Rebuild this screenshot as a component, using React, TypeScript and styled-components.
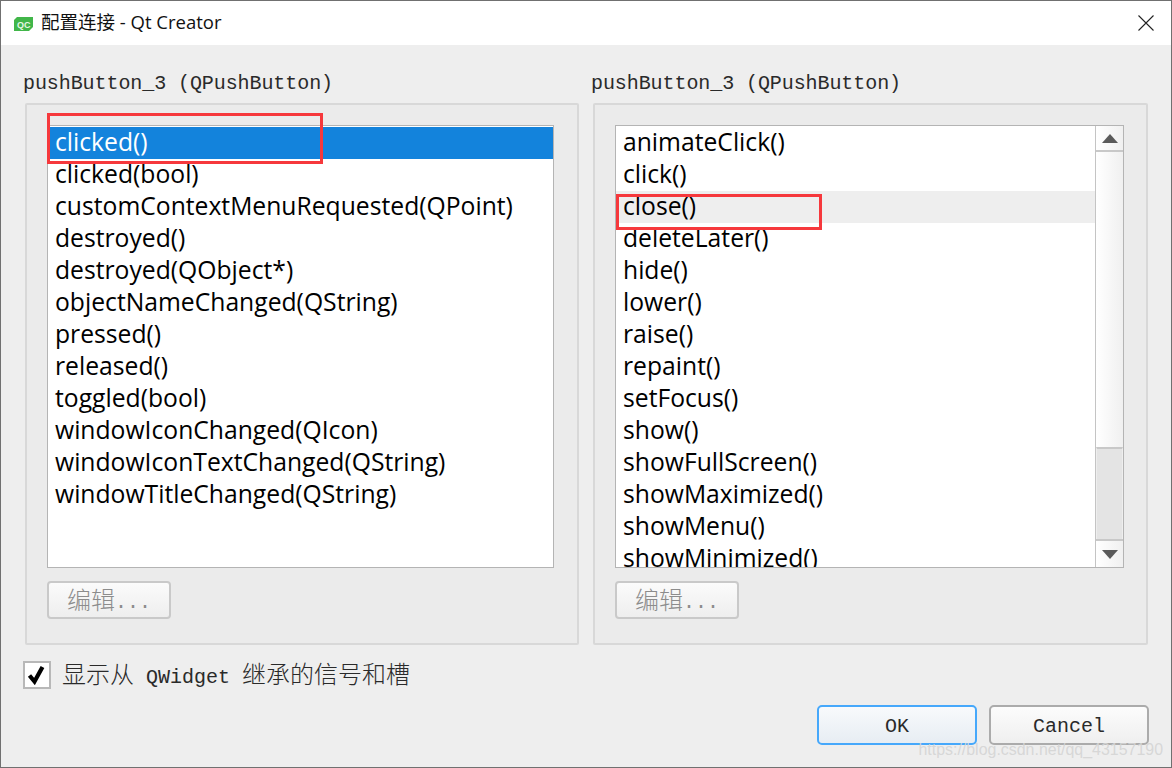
import React from "react";
import styled, { createGlobalStyle } from "styled-components";

const Global = createGlobalStyle`
  html, body { margin: 0; padding: 0; background: #eeeeee; }
  * { box-sizing: border-box; }
`;

const UI = `"Open Sans", "Noto Sans CJK SC", sans-serif`;
const MONO = `"Liberation Mono", "Noto Sans CJK SC", monospace`;

const Win = styled.div`
  position: relative;
  width: 1172px;
  height: 768px;
  border: 1px solid #707070;
  background: #eeeeee;
  overflow: hidden;
  display: flex;
  flex-direction: column;
`;
const TitleBar = styled.div`
  height: 44px;
  background: #fff;
  display: flex;
  align-items: center;
  padding: 0 17px 0 13px;
  flex: none;
`;
const QcLogo = styled.svg`
  margin-top: 2px;
  flex: none;
`;
const TitleText = styled.div`
  font: 18.5px/24px ${UI};
  color: #111;
  margin: -2px 0 0 8px;
  flex: 1;
  white-space: nowrap;
`;
const Body = styled.div`
  flex: 1;
  padding: 26px 22px 0 22px;
`;
const Columns = styled.div`
  display: grid;
  grid-template-columns: 554px 555px;
  column-gap: 14px;
  margin-left: 2px;
`;
const Column = styled.div`
  display: flex;
  flex-direction: column;
`;
const ObjectLabel = styled.div`
  font: 20px/26px ${MONO};
  letter-spacing: -0.08px;
  color: #2a2a2a;
  height: 32px;
  margin-left: -2px;
  white-space: pre;
`;
const Group = styled.div<{ $gutter: number }>`
  height: 542px;
  border: 2px solid #d8d8d8;
  border-radius: 2px;
  background: #ebebeb;
  padding: 20px ${(p) => p.$gutter}px 0 20px;
`;
const List = styled.div`
  position: relative;
  height: 443px;
  border: 1px solid #b4b4b4;
  background: #fff;
  overflow: hidden;
  display: flex;
`;
const Rows = styled.div`
  flex: 1;
  padding-top: 1px;
  min-width: 0;
`;
const Row = styled.div<{ $state?: "selected" | "hover" }>`
  height: 32px;
  padding-left: 7px;
  font: 24.7px/30px ${UI};
  white-space: nowrap;
  color: ${(p) => (p.$state === "selected" ? "#fff" : "#000")};
  background: ${(p) =>
    p.$state === "selected" ? "#1383dc" : p.$state === "hover" ? "#eeeeee" : "transparent"};
`;
const Scrollbar = styled.div`
  width: 28px;
  flex: none;
  display: flex;
  flex-direction: column;
  border-left: 1px solid #c4c4c4;
  background: linear-gradient(to right, #fff, #f0f0f0);
`;
const ScrollButton = styled.div<{ $end: "top" | "bottom" }>`
  height: ${(p) => (p.$end === "top" ? 26 : 28)}px;
  flex: none;
  display: flex;
  align-items: center;
  justify-content: center;
  border-top: ${(p) => (p.$end === "bottom" ? "2px solid #c8c8c8" : "none")};
  border-bottom: ${(p) => (p.$end === "top" ? "2px solid #c8c8c8" : "none")};
`;
const ScrollTrack = styled.div`
  flex: 1;
  display: flex;
  flex-direction: column;
  justify-content: flex-end;
`;
const ScrollHandle = styled.div`
  height: 92px;
  background: #e4e4e4;
  border-top: 2px solid #c8c8c8;
  border-left: 1px solid #eeeeee;
  border-right: 1px solid #eeeeee;
`;
const EditButton = styled.div`
  margin-top: 13px;
  width: 124px;
  height: 38px;
  border: 2px solid #c9c9c9;
  border-radius: 4px;
  background: linear-gradient(#fbfbfb, #eeeeee);
  display: flex;
  align-items: center;
  padding: 5px 0 0 18px;
  font: 20px/30px ${MONO};
  color: #8c8c8c;
  white-space: pre;
`;
const Wide = styled.span`
  font-size: 24px;
  font-weight: 300;
`;
const Inherit = styled.div`
  display: flex;
  align-items: center;
  margin: 16px 0 0 0;
  height: 28px;
`;
const CheckBox = styled.div`
  width: 28px;
  height: 28px;
  border: 2px solid #b8b8b8;
  background: #fff;
  display: flex;
  align-items: center;
  justify-content: center;
`;
const InheritLabel = styled.div`
  margin: 4px 0 0 11px;
  font: 20px/28px ${MONO};
  color: #2a2a2a;
  white-space: pre;
`;
const Footer = styled.div`
  display: flex;
  justify-content: flex-end;
  gap: 12px;
  margin-top: 16px;
`;
const DialogButton = styled.div<{ $primary?: boolean }>`
  width: 160px;
  height: 40px;
  padding-top: 3px;
  border: 2px solid ${(p) => (p.$primary ? "#46a8fb" : "#ababab")};
  border-radius: 5px;
  background: ${(p) =>
    p.$primary ? "linear-gradient(#f8fafc, #e7edf3)" : "linear-gradient(#fcfcfc, #efefef)"};
  display: flex;
  align-items: center;
  justify-content: center;
  font: 20px/26px ${MONO};
  color: #2a2a2a;
`;
const Marker = styled.div<{ $x: number; $y: number; $w: number; $h: number }>`
  position: absolute;
  left: ${(p) => p.$x}px;
  top: ${(p) => p.$y}px;
  width: ${(p) => p.$w}px;
  height: ${(p) => p.$h}px;
  border: 3px solid #f6383c;
`;
const Watermark = styled.div`
  position: absolute;
  right: 8px;
  bottom: 7px;
  font: 15.95px/20px "Liberation Sans", sans-serif;
  color: rgba(212, 212, 212, 0.9);
`;
const QcText = styled.text`
  font: bold 9px "Liberation Sans", sans-serif;
  fill: #e6f7e6;
`;

const left = [
  "clicked()", "clicked(bool)", "customContextMenuRequested(QPoint)", "destroyed()",
  "destroyed(QObject*)", "objectNameChanged(QString)", "pressed()", "released()",
  "toggled(bool)", "windowIconChanged(QIcon)", "windowIconTextChanged(QString)",
  "windowTitleChanged(QString)",
];
const right = [
  "animateClick()", "click()", "close()", "deleteLater()", "hide()", "lower()", "raise()",
  "repaint()", "setFocus()", "show()", "showFullScreen()", "showMaximized()", "showMenu()",
  "showMinimized()",
];

export default function App() {
  return (
    <Win>
      <Global />
      <TitleBar>
        <QcLogo width="19" height="14" viewBox="0 0 19 14">
          <path d="M3 0H19V10L15 14H0V3Z" fill="#41b649" />
          <QcText x="3" y="10.5">QC</QcText>
        </QcLogo>
        <TitleText>配置连接 - Qt Creator</TitleText>
        <svg width="16" height="16" viewBox="0 0 16 16">
          <path d="M.5.5 15.5 15.5M15.5.5.5 15.5" stroke="#222" strokeWidth="1.1" fill="none" />
        </svg>
      </TitleBar>
      <Body>
        <Columns>
          <Column>
            <ObjectLabel>pushButton_3 (QPushButton)</ObjectLabel>
            <Group $gutter={23}>
              <List>
                <Rows>
                  {left.map((t, i) => (
                    <Row key={t} $state={i === 0 ? "selected" : undefined}>{t}</Row>
                  ))}
                </Rows>
              </List>
              <EditButton><Wide>编辑</Wide>...</EditButton>
            </Group>
          </Column>
          <Column>
            <ObjectLabel>pushButton_3 (QPushButton)</ObjectLabel>
            <Group $gutter={22}>
              <List>
                <Rows>
                  {right.map((t, i) => (
                    <Row key={t} $state={i === 2 ? "hover" : undefined}>{t}</Row>
                  ))}
                </Rows>
                <Scrollbar>
                  <ScrollButton $end="top">
                    <svg width="16" height="9" viewBox="0 0 16 9"><path d="M8 0 16 9H0Z" fill="#5a5a5a" /></svg>
                  </ScrollButton>
                  <ScrollTrack>
                    <ScrollHandle />
                  </ScrollTrack>
                  <ScrollButton $end="bottom">
                    <svg width="16" height="9" viewBox="0 0 16 9"><path d="M8 9 16 0H0Z" fill="#5a5a5a" /></svg>
                  </ScrollButton>
                </Scrollbar>
              </List>
              <EditButton><Wide>编辑</Wide>...</EditButton>
            </Group>
          </Column>
        </Columns>
        <Inherit>
          <CheckBox>
            <svg width="20" height="20" viewBox="0 0 20 20">
              <path d="M2.5 10.5 7.5 16.5 15.5 2" stroke="#000" strokeWidth="4.2" fill="none" />
            </svg>
          </CheckBox>
          <InheritLabel><Wide>显示从</Wide> QWidget <Wide>继承的信号和槽</Wide></InheritLabel>
        </Inherit>
        <Footer>
          <DialogButton $primary>OK</DialogButton>
          <DialogButton>Cancel</DialogButton>
        </Footer>
      </Body>
      <Marker $x={46} $y={112} $w={276} $h={51} />
      <Marker $x={615} $y={193} $w={206} $h={36} />
      <Watermark>https://blog.csdn.net/qq_43157190</Watermark>
    </Win>
  );
}
